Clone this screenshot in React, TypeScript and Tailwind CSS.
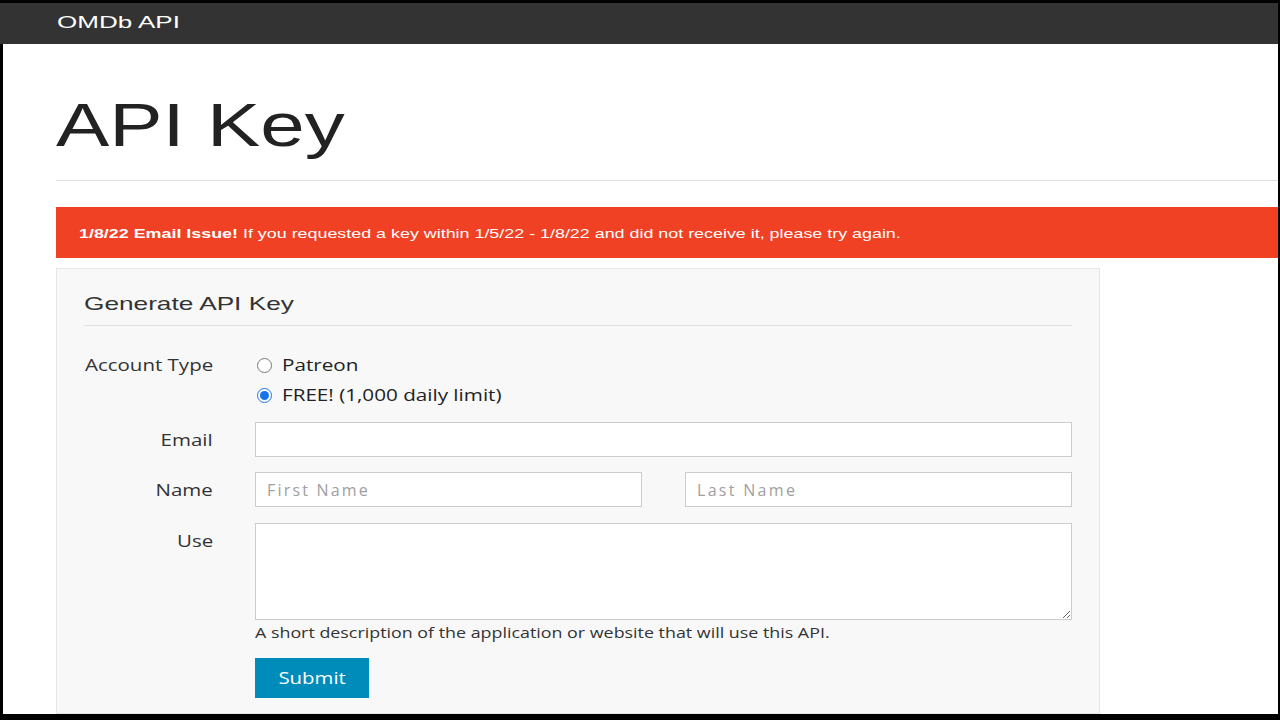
export default function App() {
  const os = { fontFamily: '"Open Sans", "Liberation Sans", sans-serif' };
  const ar = { fontFamily: '"Liberation Sans", Arial, sans-serif' };
  return (
    <div className="w-[1280px] h-[720px] bg-black overflow-hidden pt-[3px] pr-[2px] pb-[6px] flex flex-col">
      <div className="h-[41px] shrink-0 bg-[#333333] flex items-center pl-[57px] pb-[3px]">
        <span className="inline-block origin-left scale-x-[1.53] text-white text-[17px] leading-none" style={ar}>
          OMDb API
        </span>
      </div>
      <div className="flex-1 ml-[3px] bg-white pl-[53px] overflow-hidden flex flex-col">
        <h1 className="mt-[48px] text-[61px] leading-[67px] text-[#222222] font-normal" style={ar}>
          <span className="inline-block origin-left scale-x-[1.31]">API Key</span>
        </h1>
        <div className="mt-[21px] h-px bg-[#dddddd]" />
        <div className="mt-[26px] h-[51px] bg-[#f04124] flex items-center pl-[23px] shrink-0">
          <span className="inline-block origin-left scale-x-[1.375] text-white text-[13px] whitespace-nowrap pt-[2px]" style={ar}>
            <b>1/8/22 Email Issue!</b> If you requested a key within 1/5/22 - 1/8/22 and did not receive it, please try again.
          </span>
        </div>
        <div className="mt-[10px] w-[1044px] flex-1 border border-[#e6e6e6] bg-[#f8f8f8] px-[27px] pt-[24px]">
          <div className="text-[18.6px] leading-[22px] text-[#333333]" style={ar}>
            <span className="inline-block origin-left scale-x-[1.41]">Generate API Key</span>
          </div>
          <div className="mt-[10px] h-px bg-[#e0e0e0]" />
          <div className="mt-[24px] flex" style={os}>
            <div className="w-[129px] text-right text-[16px] leading-[30px] text-[#333333]">
              <span className="inline-block origin-right scale-x-[1.28]">Account Type</span>
            </div>
            <div className="ml-[42px] flex flex-col text-[16px] leading-[30px] text-[#222222]">
              <label className="flex items-center h-[30px]">
                <input type="radio" name="acct" className="m-0 ml-[2px] w-[15px] h-[15px] accent-[#1a73e8]" />
                <span className="ml-[10px] inline-block origin-left scale-x-[1.29]">Patreon</span>
              </label>
              <label className="flex items-center h-[30px]">
                <input type="radio" name="acct" defaultChecked className="m-0 ml-[2px] w-[15px] h-[15px] accent-[#1a73e8]" />
                <span className="ml-[10px] inline-block origin-left scale-x-[1.29] whitespace-nowrap">FREE! (1,000 daily limit)</span>
              </label>
            </div>
          </div>
          <div className="mt-[12px] flex items-center" style={os}>
            <div className="w-[129px] text-right text-[16px] text-[#333333]">
              <span className="inline-block origin-right scale-x-[1.28]">Email</span>
            </div>
            <input type="text" className="ml-[42px] flex-1 h-[35px] border border-[#cccccc] bg-white outline-none" />
          </div>
          <div className="mt-[15px] flex items-center" style={os}>
            <div className="w-[129px] text-right text-[16px] text-[#333333]">
              <span className="inline-block origin-right scale-x-[1.28]">Name</span>
            </div>
            <div className="ml-[42px] flex-1 grid grid-cols-2 gap-[43px]">
              <input type="text" placeholder="First Name" className="h-[35px] border border-[#cccccc] bg-white pl-[11px] text-[16px] tracking-[2.2px] placeholder:text-[#a0a0a0] outline-none" />
              <input type="text" placeholder="Last Name" className="h-[35px] border border-[#cccccc] bg-white pl-[11px] text-[16px] tracking-[2.3px] placeholder:text-[#a0a0a0] outline-none" />
            </div>
          </div>
          <div className="mt-[16px] flex items-start" style={os}>
            <div className="w-[129px] pt-[7px] text-right text-[16px] leading-[22px] text-[#333333]">
              <span className="inline-block origin-right scale-x-[1.28]">Use</span>
            </div>
            <div className="ml-[42px] flex-1 flex flex-col">
              <textarea className="block h-[97px] w-full border border-[#cccccc] bg-white outline-none" />
              <div className="mt-[3px] text-[14px] leading-[20px] text-[#333333] whitespace-nowrap">
                <span className="inline-block origin-left scale-x-[1.275]">
                  A short description of the application or website that will use this API.
                </span>
              </div>
              <div className="mt-[15px]">
                <button className="w-[114px] h-[40px] bg-[#008cba] text-white text-[17px] flex items-center justify-center">
                  <span className="inline-block scale-x-[1.2]">Submit</span>
                </button>
              </div>
            </div>
          </div>
        </div>
      </div>
    </div>
  );
}
